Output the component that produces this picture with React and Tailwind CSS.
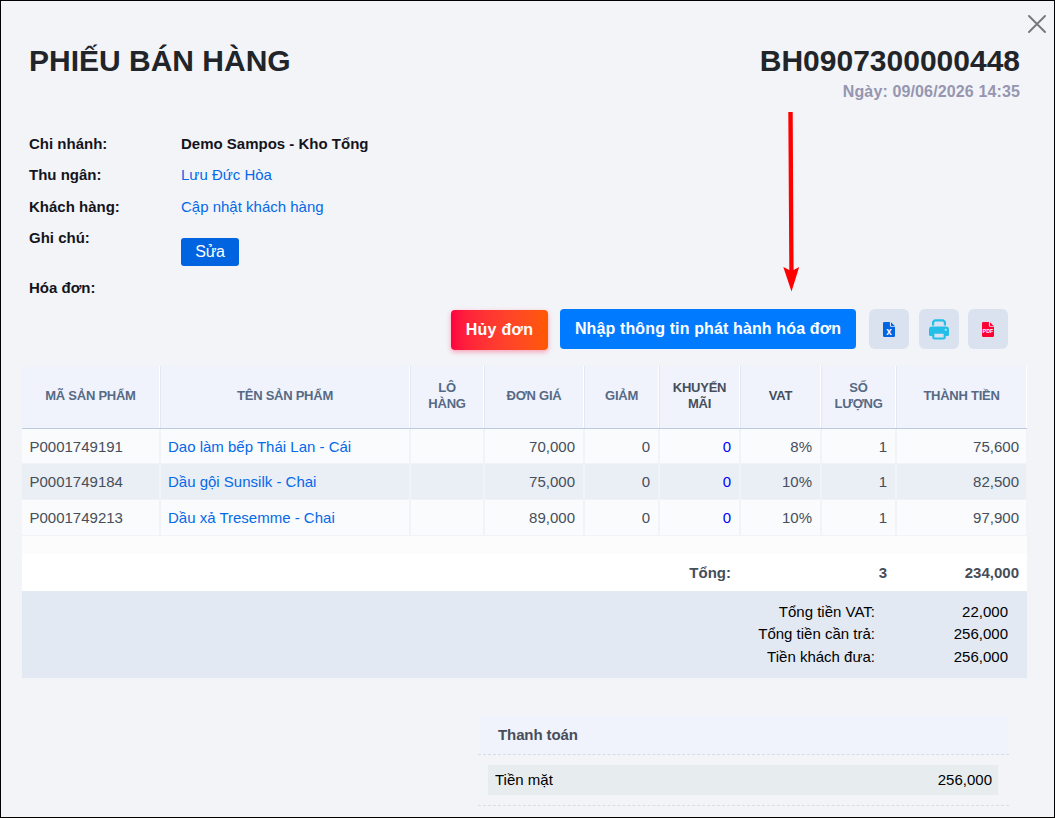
import clsx from 'clsx';

const columns = [
  { label: 'MÃ SẢN PHẨM' },
  { label: 'TÊN SẢN PHẨM' },
  { label: 'LÔ HÀNG' },
  { label: 'ĐƠN GIÁ' },
  { label: 'GIẢM' },
  { label: 'KHUYẾN MÃI', dark: true },
  { label: 'VAT', dark: true },
  { label: 'SỐ LƯỢNG' },
  { label: 'THÀNH TIỀN' },
];

const products = [
  { code: 'P0001749191', name: 'Dao làm bếp Thái Lan - Cái', price: '70,000', vat: '8%', total: '75,600' },
  { code: 'P0001749184', name: 'Dầu gội Sunsilk - Chai', price: '75,000', vat: '10%', total: '82,500' },
  { code: 'P0001749213', name: 'Dầu xả Tresemme - Chai', price: '89,000', vat: '10%', total: '97,900' },
];

const summary = [
  { label: 'Tổng tiền VAT:', value: '22,000' },
  { label: 'Tổng tiền cần trả:', value: '256,000' },
  { label: 'Tiền khách đưa:', value: '256,000' },
];

const gridCols = 'grid grid-cols-[138px_250px_74px_100px_75px_81px_81px_75px_131px]';

const InfoRow = ({ label, className, children }) => (
  <div className={clsx('flex', className)}>
    <div className="w-[152px] font-bold text-[#14151c]">{label}</div>
    <div>{children}</div>
  </div>
);

const FileIcon = ({ color, text, size, y }) => (
  <svg width="12" height="15" viewBox="0 0 12 15" className="block">
    <path d="M1.3 0H6.9V3.7Q6.9 4.8 8 4.8H12V13.7Q12 15 10.7 15H1.3Q0 15 0 13.7V1.3Q0 0 1.3 0Z" fill={color} />
    <path d="M8 0.3L11.7 3.9H8.6Q8 3.9 8 3.3Z" fill={color} />
    <text x="6" y={y} fill="#fff" fontSize={size} fontWeight="700" textAnchor="middle" fontFamily="Liberation Sans, sans-serif">
      {text}
    </text>
  </svg>
);

const PrinterIcon = () => (
  <svg width="20" height="21" viewBox="0 0 20 21" className="block" fill="none" stroke="#23bfe8" strokeWidth="2.2">
    <path d="M4.1 6.4V3.1L5.7 1.4H14.3L15.9 3.1V6.4" strokeLinejoin="round" />
    <path d="M3 7.5H17Q20 7.5 20 10.5V15.5Q20 17 18.5 17H16V14H4V17H1.5Q0 17 0 15.5V10.5Q0 7.5 3 7.5Z" fill="#23bfe8" stroke="none" />
    <path d="M4.3 13.6H15.7V18.2Q15.7 19.5 14.4 19.5H5.6Q4.3 19.5 4.3 18.2Z" fill="#dbe2ef" />
    <circle cx="16.7" cy="10.8" r="1" fill="#dbe2ef" stroke="none" />
  </svg>
);

const IconButton = ({ className, children }) => (
  <button className={clsx('flex size-10 items-center justify-center rounded-md bg-[#dbe2ef]', className)}>{children}</button>
);

const Cell = ({ className, children }) => (
  <div className={clsx('border-r border-b border-l border-[#f2f3f7] px-[7px] pt-2 first:border-l-0', className)}>{children}</div>
);

const ProductTable = () => (
  <div className="mt-[17px] ml-[21px] w-[1005px] text-[#464e5a]">
    <div className={clsx(gridCols, 'h-[63px] border-b border-[#bccbdf] bg-[#f0f3fc]')}>
      {columns.map((col) => (
        <div
          key={col.label}
          className={clsx(
            'flex items-center justify-center border-r border-l border-r-white border-l-[#e2e8f3] px-3 pb-0.5 text-center text-[13px] leading-4 font-bold tracking-[-0.25px] first:border-l-0',
            col.dark ? 'text-[#464e5a]' : 'text-[#566a85]'
          )}
        >
          {col.label}
        </div>
      ))}
    </div>
    {products.map((item, index) => (
      <div
        key={item.code}
        className={clsx(gridCols, index === 1 ? 'bg-[#eaeef5]' : 'bg-[#fafbfd]', index === 0 ? 'h-[35px]' : 'h-9')}
      >
        <Cell className="pl-[7.5px]">{item.code}</Cell>
        <Cell className="text-[#0569e8]">{item.name}</Cell>
        <Cell />
        <Cell className="pr-2 text-right">{item.price}</Cell>
        <Cell className="pr-2 text-right">0</Cell>
        <Cell className="pr-2 text-right text-[#0000ff]">0</Cell>
        <Cell className="pr-2 text-right">{item.vat}</Cell>
        <Cell className="pr-2 text-right">1</Cell>
        <Cell className="text-right">{item.total}</Cell>
      </div>
    ))}
    <div className="h-[18px] bg-[#fcfcfd]" />
    <div className={clsx(gridCols, 'h-[37px] items-center bg-white text-right font-bold')}>
      <div className="col-span-6 pr-[9px]">Tổng:</div>
      <div className="col-span-2 pr-[9px]">3</div>
      <div className="pr-2">234,000</div>
    </div>
    <div className="h-[87px] bg-[#e2e9f3] pt-[9.5px] text-black">
      {summary.map((row) => (
        <div key={row.label} className="flex h-[22.5px] justify-end pr-[19px] text-right leading-[22.5px]">
          <div>{row.label}</div>
          <div className="w-[133px]">{row.value}</div>
        </div>
      ))}
    </div>
  </div>
);

const Payment = () => (
  <div className="mt-[37px] ml-[477px] w-[531px]">
    <div className="h-10 border-b border-dashed border-[#d5dbe8]">
      <div className="mr-0.5 ml-px h-full bg-[#f0f3fc] pt-[10px] pl-[19px] font-bold tracking-[-0.1px] text-[#464e5a]">Thanh toán</div>
    </div>
    <div className="border-b border-dashed border-[#d9dde8] pt-[10px] pr-[11px] pb-[10px] pl-[10px]">
      <div className="flex h-[30px] items-center justify-between bg-[#e7edef] pr-1.5 pl-[7px] text-black">
        <span>Tiền mặt</span>
        <span>256,000</span>
      </div>
    </div>
  </div>
);

export default function App() {
  return (
    <div className="relative h-[818px] w-[1055px] overflow-hidden border border-black bg-[#f3f4f8] font-['Liberation_Sans',Arial,sans-serif] text-[15px] leading-5">
      <button className="absolute top-3.5 right-2">
        <svg width="18" height="18" viewBox="0 0 18 18" className="block" stroke="#777" strokeWidth="1.9" strokeLinecap="round">
          <path d="M1 1L17 17M17 1L1 17" />
        </svg>
      </button>

      <header className="flex justify-between pt-[42px] pr-[34px] pl-7 font-bold">
        <h1 className="text-3xl leading-9 text-[#212529]">PHIẾU BÁN HÀNG</h1>
        <div className="text-right">
          <div className="text-3xl leading-9 text-[#212529]">BH0907300000448</div>
          <div className="text-base leading-[26px] tracking-[0.13px] text-[#9696b0]">Ngày: 09/06/2026 14:35</div>
        </div>
      </header>

      <section className="mt-[29px] pl-7">
        <InfoRow label="Chi nhánh:" className="h-[31px]">
          <span className="font-bold text-[#14151c]">Demo Sampos - Kho Tổng</span>
        </InfoRow>
        <InfoRow label="Thu ngân:" className="h-8">
          <a className="text-[#0569e8]">Lưu Đức Hòa</a>
        </InfoRow>
        <InfoRow label="Khách hàng:" className="h-[31px]">
          <a className="text-[#0569e8]">Cập nhật khách hàng</a>
        </InfoRow>
        <InfoRow label="Ghi chú:" className="h-[50px]">
          <button className="mt-[10px] h-7 w-[58px] rounded-[3px] bg-[#0064e1] text-base tracking-[-0.3px] text-white">Sửa</button>
        </InfoRow>
        <InfoRow label="Hóa đơn:" className="h-[31px]" />
      </section>

      <div className="flex h-10 pl-[450px] text-base font-bold text-white">
        <button className="mt-px h-10 w-[97px] rounded-[4px] bg-linear-to-r from-[#ff0040] to-[#ff5900] tracking-[0.3px] shadow-[0_2px_5px_rgba(255,0,64,0.35)]">
          Hủy đơn
        </button>
        <button className="ml-3 w-[296px] rounded-[4px] bg-[#007bff] tracking-[0.13px]">Nhập thông tin phát hành hóa đơn</button>
        <IconButton className="ml-[13px]">
          <FileIcon color="#0064e1" text="x" size="10" y="13" />
        </IconButton>
        <IconButton className="ml-[10px]">
          <PrinterIcon />
        </IconButton>
        <IconButton className="ml-[9px]">
          <FileIcon color="#ff0033" text="PDF" size="5.4" y="11" />
        </IconButton>
      </div>

      <ProductTable />
      <Payment />

      {/* pointer to the invoice button */}
      <svg className="absolute top-[111px] left-[781px]" width="18" height="180" viewBox="0 0 18 180">
        <path d="M6.3 0H10.7L11.6 158L17.2 155L9.5 179.5L1.3 155L7.3 158Z" fill="#ff0000" />
      </svg>
    </div>
  );
}
